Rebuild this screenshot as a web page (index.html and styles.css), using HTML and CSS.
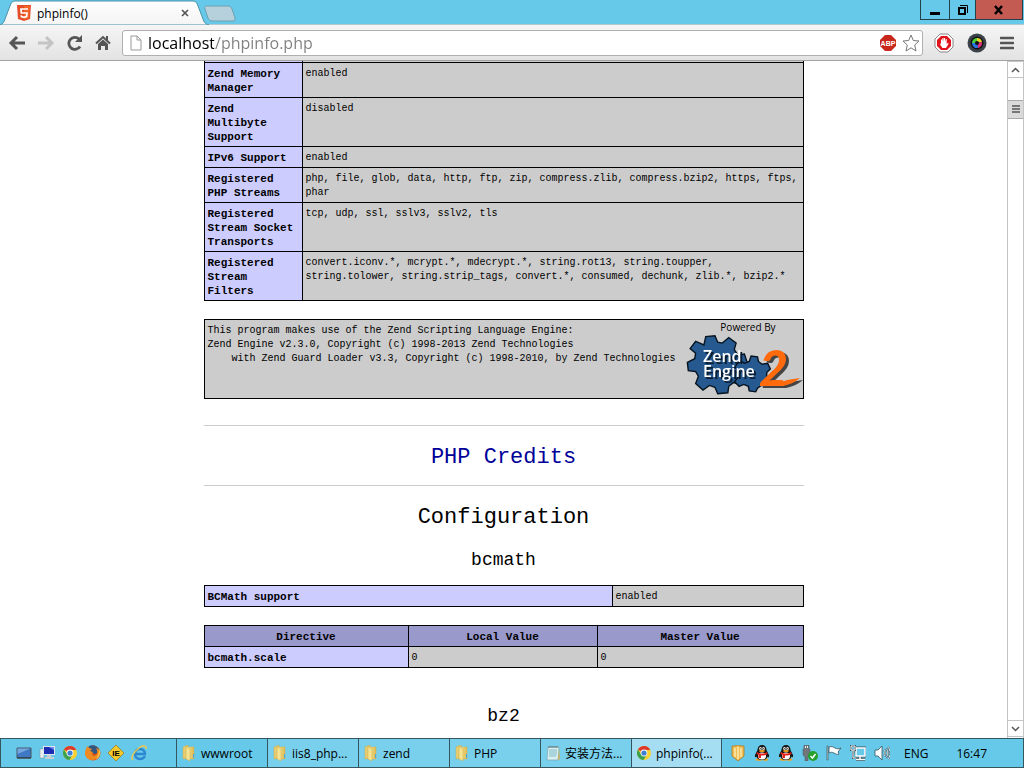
FILE: index.html
```html
<!DOCTYPE html>
<html lang="en">
<head>
  <meta charset="UTF-8">
  <meta name="viewport" content="width=device-width, initial-scale=1.0">
  <link rel="stylesheet" href="styles.css">
  <title>phpinfo()</title>
</head>
<body>
  <!-- shared icons -->
  <svg class="defs" width="0" height="0">
    <defs>
      <linearGradient id="folder-fill"><stop offset="0" stop-color="#f9eeaa"/><stop offset="1" stop-color="#dcb94f"/></linearGradient>
      <linearGradient id="tab-fill" x2="0" y2="1"><stop offset="0" stop-color="#fff"/><stop offset="1" stop-color="#f4f4f4"/></linearGradient>
      <symbol id="folder" viewBox="0 0 16 16">
        <path d="M2 2l5-2v13l-5 1z" fill="#e9cf74" stroke="#c9a646" stroke-width=".5"/>
        <path d="M5 2h8v12H5z" fill="url(#folder-fill)" stroke="#d2b050" stroke-width=".5"/>
        <path d="M5 2l4 2v12l-4-2z" fill="#f5e394" stroke="#cfac49" stroke-width=".5"/>
        <path d="M12 9h1v4h-1z" fill="#4ba3d8"/>
      </symbol>
      <symbol id="chrome" viewBox="0 0 16 16">
        <circle cx="8" cy="8" r="7" fill="#fbd02f"/>
        <path d="M8 8L1.9 4.5A7 7 0 0 1 14.3 5H8z" fill="#de3a2c"/>
        <path d="M1.9 4.5A7 7 0 0 0 7.5 15l3.2-5.2L5.2 9.5z" fill="#3ba14c"/>
        <circle cx="8" cy="8" r="3.4" fill="#fff"/>
        <circle cx="8" cy="8" r="2.6" fill="#3f7fd1"/>
      </symbol>
      <symbol id="penguin" viewBox="0 0 16 16">
        <ellipse cx="5" cy="14.5" rx="3.2" ry="1.3" fill="#f4a61c"/>
        <ellipse cx="11" cy="14.5" rx="3.2" ry="1.3" fill="#f4a61c"/>
        <path d="M8 0c3 0 4.500 2 4.500 5l2.500 5c.5 2-.5 3-1.500 1.500C13 14 11 15 8 15s-5-1-5.500-3.500C1.500 13 .5 12 1 10l2.500-5C3.500 2 5 0 8 0z" fill="#171717"/>
        <ellipse cx="8" cy="11" rx="4" ry="3.6" fill="#fff"/>
        <ellipse cx="6.500" cy="3.500" rx="1.300" ry="1.600" fill="#fff"/>
        <ellipse cx="9.500" cy="3.500" rx="1.300" ry="1.600" fill="#fff"/>
        <circle cx="6.800" cy="3.700" r=".6"/><circle cx="9.200" cy="3.700" r=".6"/>
        <ellipse cx="8" cy="6" rx="3" ry="1" fill="#f6a51b"/>
        <path d="M3 7c3 2 7 2 10 0l.5 2C11 10.500 9 10.700 7 10.500V13H4.500V9.800L2.500 9z" fill="#e2231a"/>
      </symbol>
    </defs>
  </svg>

  <header class="browser">
    <div class="tab-strip">
      <div class="tab">
        <svg class="tab-shape" width="210" height="25" viewBox="0 0 210 25">
          <path d="M0 25c3-1 4-3 5-6l5-13c1-3 2-5 5-5h178c3 0 4 2 5 5l5 13c1 3 2 5 6 6z" fill="url(#tab-fill)" stroke="#4a90aa"/>
        </svg>
        <svg class="tab-icon" width="14" height="16" viewBox="0 0 14 16">
          <path d="M0 0h14l-1 14-6 2-6-2z" fill="#e44d26"/>
          <path d="M7 1h6l-1 12-5 2z" fill="#f16529"/>
          <path d="M11 4H4l.3 4H10l-.4 3.500L7 12.300l-2.600-.8-.1-1.200" fill="none" stroke="#fff" stroke-width="1.700"/>
        </svg>
        <span class="tab-title">phpinfo()</span>
        <button class="tab-close" aria-label="Close tab">
          <svg width="8" height="8" viewBox="0 0 8 8"><path d="M1 1l6 6M7 1L1 7" stroke="#555" stroke-width="1.700"/></svg>
        </button>
      </div>
      <button class="new-tab" aria-label="New tab">
        <svg width="34" height="17" viewBox="0 0 34 17"><path d="M3 1h22c2 0 3 1 4 3l3 9c0 2 0 3-2 3H10c-3 0-4-1-5-3L2 4c-1-2 0-3 1-3z" fill="#b6d0dc" stroke="#6e9fb3"/></svg>
      </button>
      <div class="window-buttons">
        <button class="win-min" aria-label="Minimize"><svg width="12" height="12" viewBox="0 0 12 12"><path d="M1 8h10v3H1z"/></svg></button>
        <button class="win-max" aria-label="Restore"><svg width="12" height="12" viewBox="0 0 12 12"><path d="M2 4h6v6H2z" fill="none" stroke="#000" stroke-width="2"/><path d="M3 1.500h7.500V9" fill="none" stroke="#000"/></svg></button>
        <button class="win-close" aria-label="Close"><svg width="12" height="12" viewBox="0 0 12 12"><path d="M2 2l7 8M9 2l-7 8" stroke="#000" stroke-width="2.500"/></svg></button>
      </div>
    </div>

    <div class="toolbar">
      <button class="tool" aria-label="Back"><svg width="18" height="16" viewBox="0 0 18 16"><path d="M17 8H3M9 2L3 8l6 6" fill="none" stroke="#555" stroke-width="3"/></svg></button>
      <button class="tool" aria-label="Forward"><svg width="18" height="16" viewBox="0 0 18 16"><path d="M1 8h14M9 2l6 6-6 6" fill="none" stroke="#c4c4c4" stroke-width="3"/></svg></button>
      <button class="tool" aria-label="Reload"><svg width="18" height="16" viewBox="0 0 18 16"><path d="M14 11.500A6 6 0 1 1 13 4" fill="none" stroke="#555" stroke-width="2.800"/><path d="M16 0v7H9z" fill="#555"/></svg></button>
      <button class="tool" aria-label="Home"><svg width="16" height="16" viewBox="0 0 16 16"><path d="M1 8.500L8 2l7 6.500" fill="none" stroke="#555" stroke-width="2"/><path d="M11 1h2v5h-2zM3 9l5-4.500L13 9v6h-3v-4H6v4H3z" fill="#555"/></svg></button>
      <div class="omnibox">
        <svg width="12" height="16" viewBox="0 0 12 16"><path d="M1 1h6l4 4v10H1zM7 1v4h4" fill="#fff" stroke="#999"/></svg>
        <input class="address" type="text" value="localhost/phpinfo.php" aria-label="Address">
        <svg width="16" height="16" viewBox="0 0 16 16">
          <path d="M5 0h6l5 5v6l-5 5H5l-5-5V5z" fill="#c8281c"/>
          <text x="8" y="11" class="abp" text-anchor="middle">ABP</text>
        </svg>
        <svg width="18" height="18" viewBox="0 0 18 18"><path d="M9 1l2.300 5.500 5.700.5-4.300 4 1.300 6-5-3.200L4 17l1.300-6L1 7l5.700-.5z" fill="#fff" stroke="#777"/></svg>
      </div>
      <div class="extensions">
        <button class="tool" aria-label="AdBlock"><svg width="20" height="20" viewBox="0 0 20 20">
          <path d="M6 1h8l5 5v8l-5 5H6l-5-5V6z" fill="#fff" stroke="#888"/>
          <path d="M7 3h6l4 4v6l-4 4H7l-4-4V7z" fill="#e0161c"/>
          <path d="M7 10V6.500h1V9l.5-4h1v4l.5-4h1v4l.7-3h1v5l1-1 1 .5L12 15H8.500L6 11.500z" fill="#fff"/>
        </svg></button>
        <button class="tool" aria-label="Camera"><svg width="20" height="20" viewBox="0 0 20 20">
          <circle cx="10" cy="10" r="9.500" fill="#3c424a"/><circle cx="10" cy="10" r="6.500" fill="#111"/>
          <path d="M10 10V5a5 5 0 0 0-5 5z" fill="#4ad13d"/><path d="M10 10V5a5 5 0 0 1 5 4z" fill="#e5d32a"/>
          <path d="M10 10l5-1a5 5 0 0 1-4 6z" fill="#e22f7d"/><path d="M10 10l1 5a5 5 0 0 1-6-5z" fill="#2875e8"/>
          <circle cx="10" cy="10" r="2" fill="#111"/>
        </svg></button>
        <button class="tool" aria-label="Menu"><svg width="14" height="14" viewBox="0 0 14 14"><path d="M1 2h12M1 7h12M1 12h12" stroke="#555" stroke-width="2.600" stroke-linecap="round"/></svg></button>
      </div>
    </div>
  </header>

  <div class="viewport">
    <main class="page">
      <table class="info registered">
        <tr class="cut"><td class="e"></td><td class="v"></td></tr>
        <tr><th class="e" scope="row">Zend Memory Manager</th><td class="v">enabled</td></tr>
        <tr><th class="e" scope="row">Zend Multibyte Support</th><td class="v">disabled</td></tr>
        <tr><th class="e" scope="row">IPv6 Support</th><td class="v">enabled</td></tr>
        <tr><th class="e" scope="row">Registered PHP Streams</th><td class="v">php, file, glob, data, http, ftp, zip, compress.zlib, compress.bzip2, https, ftps, phar</td></tr>
        <tr><th class="e" scope="row">Registered Stream Socket Transports</th><td class="v">tcp, udp, ssl, sslv3, sslv2, tls</td></tr>
        <tr><th class="e" scope="row">Registered Stream Filters</th><td class="v">convert.iconv.*, mcrypt.*, mdecrypt.*, string.rot13, string.toupper, string.tolower, string.strip_tags, convert.*, consumed, dechunk, zlib.*, bzip2.*</td></tr>
      </table>

      <div class="zend">
        <p>This program makes use of the Zend Scripting Language Engine:<br>Zend&nbsp;Engine&nbsp;v2.3.0,&nbsp;Copyright&nbsp;(c)&nbsp;1998-2013&nbsp;Zend&nbsp;Technologies<br>&nbsp;&nbsp;&nbsp;&nbsp;with&nbsp;Zend&nbsp;Guard&nbsp;Loader&nbsp;v3.3,&nbsp;Copyright&nbsp;(c)&nbsp;1998-2010,&nbsp;by&nbsp;Zend&nbsp;Technologies</p>
        <svg class="zend-logo" width="118" height="78" viewBox="0 0 118 78">
          <text x="63" y="11" class="powered" text-anchor="middle">Powered By</text>
          <path transform="translate(-5 1) scale(.92)" d="M26 26l2-9 10-1 3 7 5 1 7-6 8 6-2 7 4 6 7-1 3 9-7 4-1 7 6 5-5 8-8-2-5 4-1 7-11 1-3-7-6-2-7 5-8-7 3-8-3-5-8-1-1-9 8-4 1-6-6-5 6-8z" fill="#25598f" stroke="#06131f" stroke-width="1.500"/>
          <path transform="translate(-2 1) scale(.92)" d="M59 46l3-3 5 3 5-2 2-6 7 1 1 5 4 3 6-1 3 6-4 4v5l4 4-4 6-6-1-4 3-2 4-7-1-1-5-5-2-5 2-5-5 4-5-1-5-5-2z" fill="#25598f" stroke="#06131f" stroke-width="1.500"/>
          <g class="two">
            <text x="74" y="66">2</text>
            <path d="M86 66l16-6 13-2c-6 5-12 7-17 8z"/>
          </g>
          <text class="name"><tspan x="18" y="42">Zend</tspan><tspan x="18" y="57">Engine</tspan></text>
        </svg>
      </div>

      <hr>
      <h1><a href="#credits">PHP Credits</a></h1>
      <hr>
      <h1>Configuration</h1>

      <h2>bcmath</h2>
      <table class="info support">
        <tr><th class="e" scope="row">BCMath support</th><td class="v">enabled</td></tr>
      </table>
      <table class="info directives">
        <tr class="h"><th scope="col">Directive</th><th scope="col">Local Value</th><th scope="col">Master Value</th></tr>
        <tr><th class="e" scope="row">bcmath.scale</th><td class="v">0</td><td class="v">0</td></tr>
      </table>

      <h2 class="next">bz2</h2>
    </main>

    <div class="scrollbar">
      <button class="scroll-arrow" aria-label="Scroll up"><svg width="9" height="6" viewBox="0 0 9 6"><path d="M1 5l3.500-3.500L8 5" fill="none" stroke="#555" stroke-width="1.500"/></svg></button>
      <div class="track"><div class="thumb"><svg width="8" height="9" viewBox="0 0 8 9"><path d="M0 1h8M0 4h8M0 7h8" stroke="#555" stroke-width="1.500"/></svg></div></div>
      <button class="scroll-arrow" aria-label="Scroll down"><svg width="9" height="6" viewBox="0 0 9 6"><path d="M1 1l3.500 3.500L8 1" fill="none" stroke="#555" stroke-width="1.500"/></svg></button>
    </div>
  </div>

  <footer class="taskbar">
    <div class="quick-launch">
      <svg width="16" height="16" viewBox="0 0 16 16"><path d="M1 3h14v10H1z" fill="#3f78c4" stroke="#49545f"/><path d="M1.500 3.500h13L1.500 9z" fill="#75a6de"/><path d="M1 12h14v1.500H1z" fill="#3b444c"/></svg>
      <svg width="16" height="16" viewBox="0 0 16 16"><path d="M1 4h4v9H1z" fill="#e9eef2" stroke="#8a969e" stroke-width=".6"/><path d="M4 1h12v9H4z" fill="#dfe4ea"/><path d="M5 2h10v7H5z" fill="#1c2fb4"/><path d="M10 2h5v3z" fill="#708ff0"/><path d="M8 10h4v2h3v2H6v-2h2z" fill="#c6ced4"/></svg>
      <svg width="16" height="16"><use href="#chrome"/></svg>
      <svg width="16" height="16" viewBox="0 0 16 16"><circle cx="8" cy="8" r="7.500" fill="#d9541a"/><path d="M4 1c4-2 9 0 10 4l-3 4-5-1-3-4z" fill="#33567f"/><path d="M1 4l1-3 2 2 3 1-2 2 3 1-1 2c1 3 4 2 5 0 1-2 0-4-1-6 4 1 5 5 3 8-2 4-7 5-11 3-3-2-4-6-2-10z" fill="#ed8a22"/><path d="M14 4c2 4 1 8-3 10 2-3 3-6 3-10z" fill="#f9c840"/></svg>
      <svg width="16" height="16" viewBox="0 0 16 16"><path d="M8 0l8 8-8 8-8-8z" fill="#f5c92c" stroke="#8d731a" stroke-width=".7"/><text x="8" y="11" class="ie-tester" text-anchor="middle">IE</text></svg>
      <svg width="17" height="16" viewBox="0 0 17 16"><path d="M14 11c-1 2-3 3-5 3-3 0-5-2-5-5s2-5 5-5 5 2 5 5H4" fill="none" stroke="#2c87d1" stroke-width="2.400"/><path d="M2 15c-3-2 1-8 6-12 4-3 8-3 7 1" fill="none" stroke="#efc74a" stroke-width="1.500"/></svg>
    </div>
    <div class="tasks">
      <button><svg width="16" height="16"><use href="#folder"/></svg>wwwroot</button>
      <button class="light"><svg width="16" height="16"><use href="#folder"/></svg>iis8_php...</button>
      <button class="light"><svg width="16" height="16"><use href="#folder"/></svg>zend</button>
      <button class="light"><svg width="16" height="16"><use href="#folder"/></svg>PHP</button>
      <button class="light"><svg width="16" height="16" viewBox="0 0 16 16"><path d="M3 2h11l-1 13H2z" fill="#d9f0f3" stroke="#7fa4ab" stroke-width=".7"/><path d="M4 5h8M4 7h8M4 9h8M4 11h7" stroke="#7cb9c4"/><path d="M4 1v2M6 1v2M8 1v2M10 1v2M12 1v2" stroke="#5e7177"/><path d="M13 15l1-12 1 11z" fill="#d5b15f"/></svg>安装方法...</button>
      <button class="active"><svg width="16" height="16"><use href="#chrome"/></svg>phpinfo(...</button>
    </div>
    <div class="tray">
      <svg width="16" height="16" viewBox="0 0 16 16"><path d="M2 1c2 0 4 0 6-1 2 1 4 1 6 1v10l-6 5-6-5z" fill="#f0bd54" stroke="#a97a22" stroke-width=".8"/><path d="M5 3v9M8 2v12M11 3v9" stroke="#fff1bd" stroke-width="1.300"/></svg>
      <svg width="16" height="16"><use href="#penguin"/></svg>
      <svg width="16" height="16"><use href="#penguin"/></svg>
      <svg width="16" height="16" viewBox="0 0 16 16"><path d="M2 0h5v4h1v6L6 12v4H3v-4l-2-2V4h1z" fill="#70777c" stroke="#4f565b" stroke-width=".5"/><path d="M3 1h1v2H3zM5 1h1v2H5z" fill="#eee"/><circle cx="11" cy="11" r="5" fill="#24a02d"/><path d="M8.500 11l2 2 3-4" fill="none" stroke="#fff" stroke-width="1.500"/></svg>
      <svg width="16" height="16" viewBox="0 0 16 16"><path d="M1 1h1v14H1z" fill="#fff" stroke="#36515c" stroke-width=".7"/><path d="M3 2c3-1 4 0 6 1 2 1 3 1 6 0l-3 4 1 2c-2 1-3 0-5-1-2-1-3-1-5 0z" fill="#fff" stroke="#36515c" stroke-width=".8"/></svg>
      <svg width="16" height="16" viewBox="0 0 16 16"><path d="M6 3h9v8H6zM10 11v3M6 14.500h9" fill="none" stroke="#36515c" stroke-width="3"/><path d="M6 3h9v8H6zM10 11v3M6 14.500h9" fill="#66c9e9" stroke="#fff" stroke-width="1.500"/><path d="M1 1h4v4H1zM3 5v8h3" fill="#66c9e9" stroke="#36515c" stroke-width="2"/><path d="M1 1h4v4H1zM3 5v8h3" fill="none" stroke="#fff"/></svg>
      <svg width="16" height="16" viewBox="0 0 16 16"><path d="M1 5h3l4-4v14l-4-4H1z" fill="#fff" stroke="#36515c" stroke-width=".8"/><path d="M10 5c1.500 2 1.500 4 0 6M12 3.500c2.500 3 2.500 6 0 9M14 2c3 4 3 8 0 12" fill="none" stroke="#36515c" stroke-width="1.800"/><path d="M10 5c1.500 2 1.500 4 0 6M12 3.500c2.500 3 2.500 6 0 9M14 2c3 4 3 8 0 12" fill="none" stroke="#fff" stroke-width=".9"/></svg>
      <span class="lang">ENG</span>
      <time>16:47</time>
    </div>
  </footer>
</body>
</html>
```
FILE: styles.css
```css
* {
    box-sizing: border-box;
}

body {
    margin: 0;
    height: 100vh;
    display: flex;
    flex-direction: column;
    overflow: hidden;
    background-color: #fff;
    font-family: "Open Sans", "Noto Sans CJK SC", sans-serif;
    font-size: 12px;
    color: #000;
}

.defs {
    position: absolute;
}

svg {
    display: block;
    flex: none;
}

button {
    display: flex;
    align-items: center;
    justify-content: center;
    padding: 0;
    border: none;
    background: none;
    font: inherit;
    color: inherit;
}

/* browser window */
.tab-strip {
    display: flex;
    height: 24px;
    background-color: #66c9e9;
}

.tab {
    position: relative;
    display: flex;
    align-items: center;
    width: 203px;
    padding: 2px 14px 0 17px;
}

.tab-shape {
    position: absolute;
    top: 0;
    left: 0;
}

.tab-icon, .tab-title, .tab-close {
    position: relative;
}

.tab-title {
    flex: 1;
    padding-left: 6px;
}

.new-tab {
    height: 24px;
    padding-top: 2px;
}

.window-buttons {
    display: flex;
    height: 20px;
    margin-left: auto;
    margin-right: 1px;
    border: 1px solid #24404a;
    border-top: none;
}

.win-min {
    width: 28px;
}

.win-max {
    width: 27px;
    border-left: 1px solid #24404a;
    border-right: 1px solid #24404a;
}

.win-close {
    width: 46px;
    background-color: #c45b52;
}

.toolbar {
    display: flex;
    align-items: center;
    gap: 11px;
    height: 37px;
    padding: 0 10px 0 8px;
    background-image: linear-gradient(#f5f5f5, #e3e3e3);
    border-top: 1px solid #b5c9d0;
    border-bottom: 1px solid #a3a3a3;
}

.extensions {
    display: flex;
    align-items: center;
    gap: 13px;
}

.omnibox {
    display: flex;
    flex: 1;
    align-items: center;
    gap: 6px;
    height: 26px;
    padding: 0 2px 0 7px;
    background-color: #fff;
    border: 1px solid #b0b0b0;
    border-radius: 3px;
}

/* host in black, path in grey */
.address {
    flex: 1;
    min-width: 0;
    height: 22px;
    padding: 0;
    border: none;
    outline: none;
    font-family: "Open Sans", sans-serif;
    font-size: 16px;
    color: transparent;
    background: linear-gradient(90deg, #000 66px, #808080 66px);
    background-clip: text;
    -webkit-background-clip: text;
}

.abp {
    font: bold 7px "Liberation Sans", sans-serif;
    fill: #fff;
}

.viewport {
    display: flex;
    flex: 1;
    min-height: 0;
    overflow: hidden;
}

.scrollbar {
    display: flex;
    flex-direction: column;
    width: 17px;
    padding-bottom: 1px;
    border-left: 1px solid #c4c4c4;
    border-right: 1px solid #c4c4c4;
}

.scroll-arrow {
    height: 17px;
    border-top: 1px solid #c4c4c4;
    border-bottom: 1px solid #c4c4c4;
}

.track {
    flex: 1;
    padding-top: 22px;
}

.thumb {
    display: flex;
    align-items: center;
    justify-content: center;
    height: 19px;
    background-color: #dadada;
    border: 1px solid #a8a8a8;
    border-width: 1px 0;
}

/* phpinfo page */
.page {
    flex: 1;
    font-family: "Liberation Mono", monospace;
    font-size: 10px;
    line-height: 14px;
}

.info {
    width: 600px;
    margin: 0 auto 18px;
    border-collapse: collapse;
    table-layout: fixed;
}

.info th, .info td {
    padding: 4px 3px 2px;
    border: 1px solid #000;
    vertical-align: top;
}

.info th {
    font-size: 11px;
}

.info .e {
    background-color: #ccccff;
    text-align: left;
}

.info .h {
    background-color: #9999cc;
}

.info .v {
    background-color: #cccccc;
}

.info .cut td {
    height: 1px;
    padding: 0;
    border-top: none;
}

.registered .e {
    width: 98px;
}

.support .e {
    width: 408px;
}

.directives th:nth-child(1) {
    width: 204px;
}

.directives th:nth-child(2) {
    width: 189px;
}

.zend {
    display: flex;
    justify-content: space-between;
    width: 600px;
    height: 80px;
    margin: 0 auto 26px;
    background-color: #cccccc;
    border: 1px solid #000;
}

.zend p {
    margin: 0;
    padding: 4px 3px;
}

.powered {
    font: 10px "Open Sans", sans-serif;
}

.name {
    font: 600 16px "Open Sans", sans-serif;
    fill: #fff;
    filter: drop-shadow(2px 2px 0 #0b1d30);
}

.two {
    font: italic 900 50px Lato, sans-serif;
    fill: #ff6a0d;
    filter: drop-shadow(3px 2px 0 #444);
}

.ie-tester {
    font: bold 8px "Liberation Sans", sans-serif;
}

hr {
    width: 600px;
    height: 1px;
    margin: 0 auto;
    border: none;
    background-color: #cccccc;
}

h1, h2 {
    margin: 0;
    text-align: center;
    font-weight: normal;
}

h1 {
    padding-top: 4px;
    font-size: 22px;
    line-height: 55px;
}

h1 a {
    color: #000099;
    text-decoration: none;
}

h2 {
    margin-bottom: 12px;
    padding-top: 2px;
    font-size: 18px;
    line-height: 26px;
}

.next {
    margin-top: 33px;
}

/* windows taskbar */
.taskbar {
    display: flex;
    height: 30px;
    background-color: #66c9e9;
    border: 1px solid #35555f;
}

.quick-launch {
    display: flex;
    align-items: center;
    gap: 7px;
    width: 175px;
    padding-left: 15px;
}

.tasks {
    display: flex;
}

.tasks button {
    justify-content: flex-start;
    gap: 4px;
    width: 91px;
    padding-left: 4px;
    border-left: 1px solid #35555f;
    white-space: nowrap;
}

.tasks .light {
    background-color: #78d0ec;
}

.tasks .active {
    background-color: #a5def2;
    border-right: 1px solid #35555f;
}

.tray {
    display: flex;
    flex: 1;
    align-items: center;
    gap: 8px;
    padding-left: 8px;
}

.lang {
    padding-left: 6px;
}

time {
    margin-left: auto;
    padding-right: 36px;
}
```
